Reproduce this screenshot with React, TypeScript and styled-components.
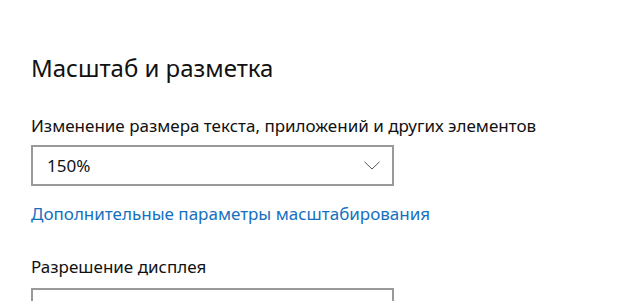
import styled, { createGlobalStyle } from "styled-components"

const GlobalStyle = createGlobalStyle`
  html, body {
    margin: 0;
    padding: 0;
    background: #ffffff;
  }
  body {
    font-family: "Noto Sans", "Open Sans", sans-serif;
    color: #000000;
  }
`

const Page = styled.main`
  display: flex;
  flex-direction: column;
  align-items: flex-start;
  width: 640px;
  height: 301px;
  overflow: hidden;
  padding: 52px 0 0 31px;
  box-sizing: border-box;
`

const Title = styled.h1`
  flex-shrink: 0;
  margin: 0;
  font-size: 24px;
  font-weight: 400;
  line-height: 32px;
  color: #111111;
`

const Label = styled.div`
  flex-shrink: 0;
  margin-top: ${props => props.$top}px;
  font-size: 17px;
  line-height: 22px;
  color: #111111;
`

const Select = styled.div`
  flex-shrink: 0;
  display: flex;
  align-items: center;
  justify-content: space-between;
  box-sizing: border-box;
  width: 363px;
  height: 41px;
  margin-top: ${props => props.$top}px;
  padding: 0 12px 0 14px;
  border: 2px solid #999999;
  font-size: 17px;
  color: #111111;
`

const Link = styled.a`
  flex-shrink: 0;
  margin-top: 17px;
  font-size: 17px;
  line-height: 22px;
  color: #1570c0;
  text-decoration: none;
`

const Chevron = () => (
  <svg width="16" height="9" viewBox="0 0 16 9" fill="none">
    <path d="M0.5 0.8l7.5 7.2 7.5-7.2" stroke="#555" strokeWidth="1" />
  </svg>
)

export default function App() {
  return (
    <Page>
      <GlobalStyle />
      <Title>Масштаб и разметка</Title>
      <Label $top={31}>Изменение размера текста, приложений и других элементов</Label>
      <Select $top={8}>
        <span>150%</span>
        <Chevron />
      </Select>
      <Link href="#">Дополнительные параметры масштабирования</Link>
      <Label $top={31}>Разрешение дисплея</Label>
      <Select $top={10} />
    </Page>
  )
}
